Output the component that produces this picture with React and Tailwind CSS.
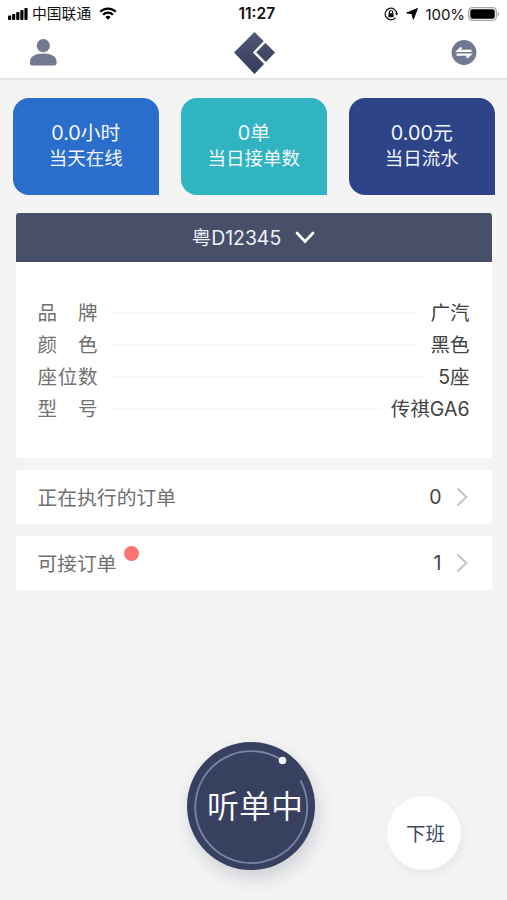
const stats = [
  { value: '0.0小时', label: '当天在线', color: 'bg-[#2b6dcb]' },
  { value: '0单', label: '当日接单数', color: 'bg-[#31b4c1]' },
  { value: '0.00元', label: '当日流水', color: 'bg-[#2e4489]' },
];

const details = [
  { label: ['品', '牌'], value: '广汽' },
  { label: ['颜', '色'], value: '黑色' },
  { label: ['座', '位', '数'], value: '5座' },
  { label: ['型', '号'], value: '传祺GA6' },
];

function StatusBar() {
  return (
    <div className="flex h-[27px] items-center pl-[8px] pr-[7px] text-[15px] leading-[27px] text-[#111]">
      <div className="flex w-[230.500px] items-center">
        <svg width="20" height="12" viewBox="0 0 20 12" fill="#000">
          <rect x="0" y="7.5" width="3.2" height="4.5" rx="0.9" />
          <rect x="4.1" y="6" width="3.2" height="6" rx="0.9" />
          <rect x="8.2" y="4" width="3.2" height="8" rx="0.9" />
          <rect x="12.3" y="2" width="3.2" height="10" rx="0.9" />
          <rect x="16.4" y="0" width="3.2" height="12" rx="0.9" />
        </svg>
        <span className="ml-[4px] mt-px text-[14.800px]">中国联通</span>
        <svg className="ml-[7.500px]" width="18" height="13" viewBox="0 0 18 13" fill="none" stroke="#000" strokeWidth="2.3">
          <path d="M1.2 4.8a11 11 0 0 1 15.6 0" />
          <path d="M4.1 7.7a7 7 0 0 1 9.8 0" />
          <path d="M9 12.8 6.3 10a3.8 3.8 0 0 1 5.4 0Z" fill="#000" stroke="none" />
        </svg>
      </div>
      <span className="text-[15.500px] font-semibold">11:27</span>
      <div className="flex flex-1 items-center justify-end">
        <svg width="14" height="14" viewBox="0 0 14 14" fill="none" stroke="#111" strokeWidth="1.2">
          <path d="M11.6 10.6A5.8 5.8 0 1 1 12.8 6.6" />
          <path d="M10.900 6.300h3.200l-1.600 2.300Z" fill="#111" stroke="none" />
          <rect x="4.400" y="6.300" width="5.200" height="4" rx="0.600" fill="#111" stroke="none" />
          <path d="M5.400 6.500V5.100a1.600 1.600 0 0 1 3.200 0v1.400" />
        </svg>
        <svg className="ml-[8px]" width="12" height="12" viewBox="0 0 12 12">
          <path d="M11.500.500 7.300 11.300 6.100 5.900.700 4.900Z" fill="#000" stroke="#000" strokeWidth="0.900" strokeLinejoin="round" />
        </svg>
        <span className="ml-[7px] mt-px text-[15px] tracking-[-0.050px]">100%</span>
        <svg className="ml-[3px]" width="32" height="14" viewBox="0 0 32 14">
          <rect x="0.700" y="0.700" width="27.600" height="12.600" rx="3.600" fill="#fff" stroke="#a6a6a6" strokeWidth="1.300" />
          <rect x="2.300" y="2.300" width="24.400" height="9.400" rx="2" fill="#000" />
          <path d="M29.600 4.800a2.300 2.300 0 0 1 0 4.400Z" fill="#a6a6a6" />
        </svg>
      </div>
    </div>
  );
}

function NavBar() {
  return (
    <div className="flex h-[51px] items-center justify-between pl-[30px] pr-[30px]">
      <svg width="27" height="27" viewBox="0 0 27 27" fill="#747891">
        <circle cx="13.300" cy="6.700" r="6.600" />
        <path d="M0 22.300c0-4.600 5.200-7.800 13.300-7.800s13.300 3.200 13.300 7.800v1.900a2.200 2.200 0 0 1-2.200 2.200H2.200A2.200 2.200 0 0 1 0 24.200Z" />
      </svg>
      <svg className="ml-px" width="41" height="42" viewBox="0 0 41 42">
        <defs>
          <linearGradient id="logo" x1="0" y1="0" x2="0" y2="1">
            <stop offset="0" stopColor="#515874" />
            <stop offset="1" stopColor="#353c5c" />
          </linearGradient>
        </defs>
        <path d="M20.500 0 41 20.500 20.500 42 0 20.500Z" fill="url(#logo)" />
        <path d="M32.500 8 20.500 20.500 33 33" fill="none" stroke="#fff" strokeWidth="2.500" />
      </svg>
      <svg width="26" height="26" viewBox="0 0 26 26">
        <circle cx="13" cy="12.500" r="12.400" fill="#747891" />
        <path d="M20.500 10.800H7l3.500-3.200M5.500 14.600h13.600l-3.500 3.200" fill="none" stroke="#fff" strokeWidth="2.200" />
      </svg>
    </div>
  );
}

function OrderRow({ label, count, dot }) {
  return (
    <div className="mx-[15.500px] mt-[12px] flex h-[54px] items-center rounded-[2px] bg-white pl-[22px] pr-[24px]">
      <span className="relative mt-[3px] text-[19.800px] text-[#707070]">
        {label}
        {dot && <span className="absolute left-[86px] top-[-4px] h-[15px] w-[15px] rounded-full bg-[#fb7471]" />}
      </span>
      <span className="ml-auto mt-[2px] font-['Inter'] text-[19.500px] font-normal text-[#444]">{count}</span>
      <svg className="ml-[14px]" width="12" height="20" viewBox="0 0 12 20" fill="none" stroke="#c4c4c6" strokeWidth="2">
        <path d="M1.500 1.500 10.300 10 1.500 18.500" />
      </svg>
    </div>
  );
}

export default function App() {
  return (
    <div className="flex h-[900px] w-[507px] flex-col overflow-hidden bg-[#f4f4f4] font-['Inter','Noto_Sans_CJK_SC',sans-serif] font-[390]">
      <header className="h-[80px] shrink-0 border-b-2 border-[#e6e6e6] bg-white">
        <StatusBar />
        <NavBar />
      </header>

      <section className="mt-[17.500px] flex gap-[22px] pl-[13.300px]">
        {stats.map((s) => (
          <div
            key={s.label}
            className={`flex h-[97.500px] w-[146px] shrink-0 flex-col items-center rounded-[16px] rounded-br-none pr-px pt-[22.500px] text-[#f2f7fd] ${s.color}`}
          >
            <span className="text-[19.800px] leading-[26px]">{s.value}</span>
            <span className="text-[18.500px] leading-[24.500px]">{s.label}</span>
          </div>
        ))}
      </section>

      <section className="mx-[15.500px] mt-[18px] h-[245px] shrink-0 overflow-hidden rounded-[3px] bg-white">
        <div className="flex h-[49px] items-center justify-center bg-[#484f69] text-[19.400px] text-[#eef2fa]">
          <span className="mt-[2px]">粤D12345</span>
          <svg className="ml-[14px]" width="20" height="13" viewBox="0 0 20 13" fill="none" stroke="#fff" strokeWidth="2.600" strokeLinecap="round">
            <path d="M2 2l8 8.500L18 2" />
          </svg>
        </div>
        <div className="px-[22px] pt-[36px] text-[19.500px]">
          {details.map((d) => (
            <div key={d.value} className="flex h-[31.800px] items-center">
              <span className="flex w-[60px] justify-between text-[#707070]">
                {d.label.map((c) => (
                  <span key={c}>{c}</span>
                ))}
              </span>
              <span className="mb-[2px] ml-[12px] mr-[8px] h-px flex-1 bg-[#f8f8f8]" />
              <span className="text-[#424242]">{d.value}</span>
            </div>
          ))}
        </div>
      </section>

      <OrderRow label="正在执行的订单" count={0} />
      <OrderRow label="可接订单" count={1} dot />

      <footer className="mt-[152px] flex items-start pl-[187px]">
        <button className="relative flex h-[128px] w-[128px] items-center justify-center rounded-full bg-[#384060] shadow-[3px_8px_18px_rgba(56,64,96,0.2)]">
          <svg className="absolute inset-0" width="128" height="128" viewBox="0 0 128 128" fill="none">
            <path d="M94.500 18A56 56 0 1 0 113.500 38.500" stroke="#7b84a6" strokeWidth="1.800" />
            <circle cx="95.500" cy="18.500" r="3.800" fill="#f2f6ff" />
          </svg>
          <span className="relative left-[4px] top-px text-[32px] font-[350] text-white">听单中</span>
        </button>
        <button className="ml-[72px] mt-[54px] flex h-[74px] w-[74px] items-center justify-center rounded-full bg-white pl-[3px] pt-[3px] text-[19.500px] text-[#41455f] shadow-[2px_4px_12px_rgba(0,0,0,0.06)]">
          下班
        </button>
      </footer>
    </div>
  );
}
